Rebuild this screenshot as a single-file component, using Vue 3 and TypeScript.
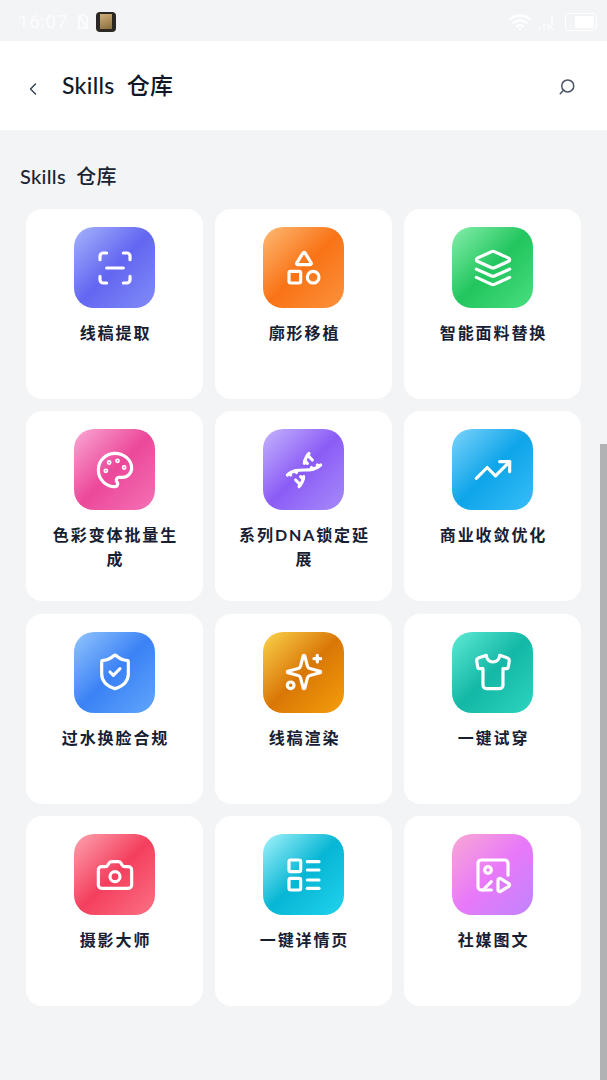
<template>
  <div class="page">
    <div class="status-bar">
      <span class="clock">16:07</span>
      <svg class="bell-off" viewBox="0 0 12 18" fill="none" stroke="currentColor" stroke-width="1.6">
        <path d="M2 14V6a4 4 0 0 1 8 0v8l1 1H1z" />
        <path d="M2 2l8 14" />
      </svg>
      <span class="app-badge"><span class="app-bag"></span></span>
      <span class="status-spacer"></span>
      <svg class="wifi" viewBox="0 0 24 18" fill="none" stroke="currentColor" stroke-width="2.2" stroke-linecap="round">
        <path d="M2 6.5c6-5.5 14-5.5 20 0" />
        <path d="M5.5 10c4-3.5 9-3.5 13 0" />
        <path d="M9 13.2c2-1.5 4-1.5 6 0" />
        <circle cx="12" cy="16" r="1.2" fill="currentColor" stroke="none" />
      </svg>
      <svg class="signal" viewBox="0 0 18 18" fill="none" stroke="currentColor" stroke-width="1.6">
        <path d="M2 17v-3M6 17v-6M14 11V2" />
        <path d="M9 11l6 6M15 11l-6 6" />
      </svg>
      <span class="battery"><span class="battery-fill"></span></span>
    </div>

    <header class="top-bar">
      <button class="icon-btn back" type="button" aria-label="返回">
        <svg viewBox="0 0 24 24" fill="none" stroke="currentColor" stroke-width="1.7" stroke-linecap="round" stroke-linejoin="round">
          <path d="m15 18-6-6 6-6" />
        </svg>
      </button>
      <h1 class="top-title">Skills 仓库</h1>
      <button class="icon-btn search" type="button" aria-label="搜索">
        <svg viewBox="0 0 24 24" fill="none" stroke="currentColor" stroke-width="2" stroke-linecap="round" stroke-linejoin="round">
          <circle cx="13" cy="10.5" r="8" />
          <path d="m3 21 4.4-4.8" />
        </svg>
      </button>
    </header>

    <main class="content">
      <h2 class="section-title">Skills 仓库</h2>
      <div class="grid">
        <div v-for="skill in skills" :key="skill.name" class="card">
          <div class="tile" :class="skill.tone">
            <svg class="glyph" viewBox="0 0 24 24" fill="none" stroke="currentColor" stroke-width="1.9" stroke-linecap="round" stroke-linejoin="round">
              <path v-for="d in skill.paths" :key="d" :d="d" />
              <rect v-for="r in skill.rects ?? []" :key="r.join()" :x="r[0]" :y="r[1]" :width="r[2]" :height="r[2]" rx="1" />
              <circle v-for="c in skill.circles ?? []" :key="c.join()" :cx="c[0]" :cy="c[1]" :r="c[2]" />
            </svg>
          </div>
          <div class="label">{{ skill.name }}</div>
        </div>
      </div>
    </main>

    <div class="scroll-thumb"></div>
  </div>
</template>

<script setup lang="ts">
interface Skill {
  name: string
  tone: string
  paths: string[]
  rects?: number[][]
  circles?: number[][]
}

const skills: Skill[] = [
  {
    name: '线稿提取',
    tone: 'indigo',
    paths: ['M3 7V5a2 2 0 0 1 2-2h2', 'M17 3h2a2 2 0 0 1 2 2v2', 'M21 17v2a2 2 0 0 1-2 2h-2', 'M7 21H5a2 2 0 0 1-2-2v-2', 'M7 12h10']
  },
  {
    name: '廓形移植',
    tone: 'orange',
    paths: ['M8.3 10a.7.7 0 0 1-.626-1.079L11.4 3a.7.7 0 0 1 1.198-.043L16.3 8.9a.7.7 0 0 1-.572 1.1Z'],
    rects: [[3, 14, 7]],
    circles: [[17.5, 17.5, 3.5]]
  },
  {
    name: '智能面料替换',
    tone: 'green',
    paths: [
      'm12.83 2.18a2 2 0 0 0-1.66 0L2.6 6.08a1 1 0 0 0 0 1.83l8.58 3.91a2 2 0 0 0 1.66 0l8.58-3.9a1 1 0 0 0 0-1.83Z',
      'm22 17.65-9.17 4.16a2 2 0 0 1-1.66 0L2 17.65',
      'm22 12.65-9.17 4.16a2 2 0 0 1-1.66 0L2 12.65'
    ]
  },
  {
    name: '色彩变体批量生成',
    tone: 'pink',
    paths: [
      'M12 2C6.5 2 2 6.5 2 12s4.5 10 10 10c.926 0 1.648-.746 1.648-1.688 0-.437-.18-.835-.437-1.125-.29-.289-.438-.652-.438-1.125a1.64 1.64 0 0 1 1.668-1.668h1.996c3.051 0 5.555-2.503 5.555-5.554C21.965 6.012 17.461 2 12 2z'
    ],
    circles: [[13.5, 6.5, 0.5], [17.5, 10.5, 0.5], [8.5, 7.5, 0.5], [6.5, 12.5, 0.5]]
  },
  {
    name: '系列DNA锁定延展',
    tone: 'purple',
    paths: [
      'm10 16 1.5 1.5',
      'm14 8-1.5-1.5',
      'M15 2c-1.798 1.998-2.518 3.995-2.807 5.993',
      'm16.5 10.5 1 1',
      'm17 6-2.891-2.891',
      'M2 15c6.667-6 13.333 0 20-6',
      'm20 9 .891.891',
      'M3.109 14.109 4 15',
      'm6.5 12.5 1 1',
      'm7 18 2.891 2.891',
      'M9 22c1.798-1.998 2.518-3.995 2.807-5.993'
    ]
  },
  {
    name: '商业收敛优化',
    tone: 'sky',
    paths: ['M16 7h6v6', 'm22 7-8.5 8.5-5-5L2 17']
  },
  {
    name: '过水换脸合规',
    tone: 'blue',
    paths: [
      'M20 13c0 5-3.5 7.5-7.66 8.95a1 1 0 0 1-.67-.01C7.5 20.5 4 18 4 13V6a1 1 0 0 1 1-1c2 0 4.5-1.2 6.24-2.72a1.17 1.17 0 0 1 1.52 0C14.51 3.81 17 5 19 5a1 1 0 0 1 1 1z',
      'm9 12 2 2 4-4'
    ]
  },
  {
    name: '线稿渲染',
    tone: 'amber',
    paths: [
      'M9.937 15.5A2 2 0 0 0 8.5 14.063l-6.135-1.582a.5.5 0 0 1 0-.962L8.5 9.936A2 2 0 0 0 9.937 8.5l1.582-6.135a.5.5 0 0 1 .963 0L14.063 8.5A2 2 0 0 0 15.5 9.937l6.135 1.581a.5.5 0 0 1 0 .964L15.5 14.063a2 2 0 0 0-1.437 1.437l-1.582 6.135a.5.5 0 0 1-.963 0z',
      'M20 2v4',
      'M22 4h-4'
    ],
    circles: [[4, 20, 2]]
  },
  {
    name: '一键试穿',
    tone: 'teal',
    paths: [
      'M20.38 3.46 16 2a4 4 0 0 1-8 0L3.62 3.46a2 2 0 0 0-1.34 2.23l.58 3.47a1 1 0 0 0 .99.84H6v10c0 1.1.9 2 2 2h8a2 2 0 0 0 2-2V10h2.15a1 1 0 0 0 .99-.84l.58-3.47a2 2 0 0 0-1.34-2.23z'
    ]
  },
  {
    name: '摄影大师',
    tone: 'rose',
    paths: [
      'M13.997 4a2 2 0 0 1 1.76 1.05l.486.9A2 2 0 0 0 18.003 7H20a2 2 0 0 1 2 2v9a2 2 0 0 1-2 2H4a2 2 0 0 1-2-2V9a2 2 0 0 1 2-2h1.997a2 2 0 0 0 1.759-1.048l.489-.904A2 2 0 0 1 10.004 4z'
    ],
    circles: [[12, 13, 3]]
  },
  {
    name: '一键详情页',
    tone: 'cyan',
    paths: ['M14 4h7', 'M14 9h7', 'M14 15h7', 'M14 20h7'],
    rects: [[3, 3, 7], [3, 14, 7]]
  },
  {
    name: '社媒图文',
    tone: 'fuchsia',
    paths: [
      'M15 15.003a1 1 0 0 1 1.517-.859l4.997 2.997a1 1 0 0 1 0 1.718l-4.997 2.997a1 1 0 0 1-1.517-.86z',
      'M21 12.17V5a2 2 0 0 0-2-2H5a2 2 0 0 0-2 2v14a2 2 0 0 0 2 2h6',
      'm6 21 5-5'
    ],
    circles: [[9, 9, 2]]
  }
]
</script>

<style scoped>
.page {
  position: relative;
  height: 1080px;
  overflow: hidden;
  background: #f3f4f6;
  font-family: Lato, "Noto Sans CJK SC", sans-serif;
  color: #1f2937;
}

.status-bar {
  height: 41px;
  box-sizing: border-box;
  display: flex;
  align-items: center;
  padding: 2px 10px 0 18px;
  color: #fff;
}

.clock {
  font-family: Roboto, sans-serif;
  font-size: 19px;
  opacity: 0.75;
  letter-spacing: 0.5px;
}

.bell-off {
  width: 12px;
  height: 18px;
  margin-left: 9px;
  opacity: 0.85;
}

.app-badge {
  width: 20px;
  height: 20px;
  margin-left: 7px;
  border-radius: 4px;
  background: #2b2722;
  display: flex;
  align-items: center;
  justify-content: center;
}

.app-bag {
  width: 12px;
  height: 15px;
  background: linear-gradient(160deg, #d0b078, #8a6d3e);
}

.status-spacer {
  flex: 1;
}

.wifi {
  width: 24px;
  height: 18px;
}

.signal {
  width: 18px;
  height: 18px;
  margin-left: 6px;
  opacity: 0.8;
}

.battery {
  width: 32px;
  height: 18px;
  margin-left: 9px;
  box-sizing: border-box;
  border: 1.5px solid #fff;
  border-radius: 4px;
  padding: 2px;
  display: flex;
  justify-content: flex-end;
}

.battery-fill {
  width: 19px;
  background: #fff;
  border-radius: 1px;
}

.top-bar {
  height: 89px;
  background: #fff;
  display: flex;
  align-items: center;
  padding: 0 31px 0 23px;
}

.icon-btn {
  border: 0;
  padding: 0;
  background: none;
  display: flex;
}

.back {
  width: 20px;
  height: 20px;
  margin-top: 6px;
  color: #374151;
}

.back svg,
.search svg {
  width: 100%;
  height: 100%;
}

.top-title {
  margin: -2px 0 0 19px;
  flex: 1;
  font-size: 23px;
  line-height: 30px;
  font-weight: 500;
  letter-spacing: 0.3px;
  word-spacing: 6px;
  color: #111827;
}

.search {
  width: 18px;
  height: 18px;
  margin-top: 3px;
  color: #4b5563;
}

.content {
  padding-top: 32px;
}

.section-title {
  margin: 0 0 19px 20px;
  font-size: 20px;
  line-height: 28px;
  font-weight: 500;
  letter-spacing: 0.3px;
  word-spacing: 5px;
  color: #1a2333;
}

.grid {
  display: grid;
  grid-template-columns: repeat(3, 177px);
  grid-auto-rows: 190px;
  column-gap: 12px;
  row-gap: 12.4px;
  padding: 0 26px;
}

.card {
  background: #fff;
  border-radius: 16px;
  padding: 18px 20px 0;
  display: flex;
  flex-direction: column;
  align-items: center;
}

.tile {
  width: 81px;
  height: 81px;
  flex: none;
  border-radius: 20px;
  color: #fff;
  display: flex;
  align-items: center;
  justify-content: center;
}

.glyph {
  width: 40px;
  height: 40px;
}

.label {
  margin: 13px 0 0 2px;
  font-size: 16px;
  line-height: 24px;
  font-weight: 700;
  letter-spacing: 1.9px;
  text-align: center;
  color: #172033;
}

.indigo { background: linear-gradient(135deg, #a5b4fc 0%, #6366f1 50%, #818cf8 100%); }
.orange { background: linear-gradient(135deg, #fdba74 0%, #f97316 50%, #fb923c 100%); }
.green { background: linear-gradient(135deg, #86efac 0%, #22c55e 50%, #4ade80 100%); }
.pink { background: linear-gradient(135deg, #f9a8d4 0%, #ec4899 50%, #f472b6 100%); }
.purple { background: linear-gradient(135deg, #c4b5fd 0%, #8b5cf6 50%, #a78bfa 100%); }
.sky { background: linear-gradient(135deg, #7dd3fc 0%, #0ea5e9 50%, #38bdf8 100%); }
.blue { background: linear-gradient(135deg, #93c5fd 0%, #3b82f6 50%, #60a5fa 100%); }
.amber { background: linear-gradient(135deg, #fcd34d 0%, #d97706 50%, #f59e0b 100%); }
.teal { background: linear-gradient(135deg, #5eead4 0%, #14b8a6 50%, #2dd4bf 100%); }
.rose { background: linear-gradient(135deg, #fda4af 0%, #f43f5e 50%, #fb7185 100%); }
.cyan { background: linear-gradient(135deg, #a5f3fc 0%, #06b6d4 50%, #22d3ee 100%); }
.fuchsia { background: linear-gradient(135deg, #f9a8d4 0%, #e879f9 50%, #c084fc 100%); }

.scroll-thumb {
  position: absolute;
  top: 444px;
  right: 0;
  bottom: 0;
  width: 7px;
  background: #b1b2b4;
}
</style>
